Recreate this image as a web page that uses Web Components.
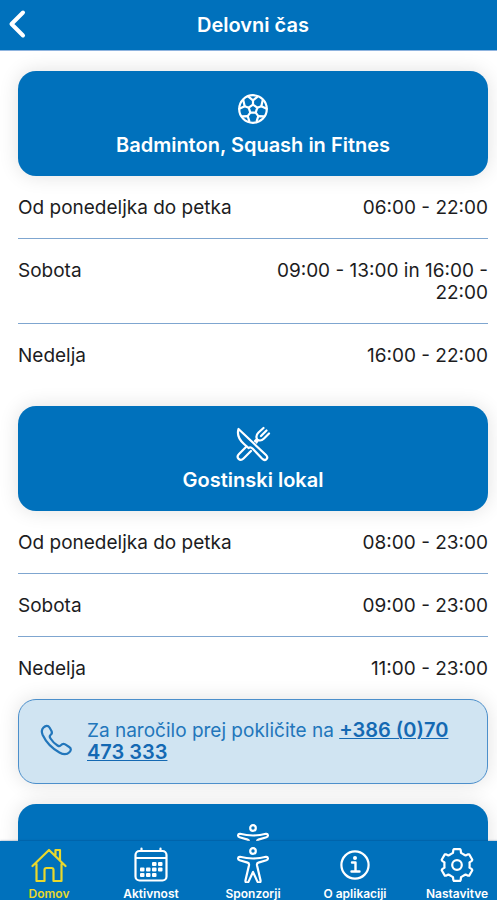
<!DOCTYPE html>
<html lang="sl">
<head>
<meta charset="utf-8">
<meta name="viewport" content="width=device-width, initial-scale=1">
<title>Delovni čas</title>
<style>
  body {
    margin: 0;
    overflow: hidden;
    background: #fff;
    color: #1c1c1e;
    font: 400 19px/22px Inter, "Liberation Sans", sans-serif;
    --brand: #0071bc;
    --active: #e9d82c;
  }
</style>
</head>
<body>
<app-screen>
  <app-header slot="header">Delovni čas</app-header>

  <section-card icon="ball">Badminton, Squash in Fitnes</section-card>
  <hours-table label="Badminton, Squash in Fitnes"
    hours="Od ponedeljka do petka|06:00 - 22:00;Sobota|09:00 - 13:00 in 16:00 - 22:00;Nedelja|16:00 - 22:00"></hours-table>

  <section-card icon="cutlery">Gostinski lokal</section-card>
  <hours-table label="Gostinski lokal" flush
    hours="Od ponedeljka do petka|08:00 - 23:00;Sobota|09:00 - 23:00;Nedelja|11:00 - 23:00"></hours-table>
  <phone-note number="+386 (0)70 473 333">Za naročilo prej pokličite na</phone-note>

  <section-card icon="person"></section-card>

  <tab-bar slot="footer">
    <tab-item icon="home" active>Domov</tab-item>
    <tab-item icon="calendar">Aktivnost</tab-item>
    <tab-item icon="person">Sponzorji</tab-item>
    <tab-item icon="info">O aplikaciji</tab-item>
    <tab-item icon="gear">Nastavitve</tab-item>
  </tab-bar>
</app-screen>

<script>
// cog outline with six teeth around the middle of a 36x36 box
function gearPath() {
  const points = [];
  for (let i = 0; i < 6; i++) {
    const mid = i * 60 - 90;
    [[-25, 12.6], [-18, 12.8], [-14, 15.4], [-11, 16.2], [11, 16.2], [14, 15.4], [18, 12.8], [25, 12.6]].forEach(([off, r]) => {
      const a = (mid + off) * Math.PI / 180;
      points.push((18 + r * Math.cos(a)).toFixed(1) + " " + (18 + r * Math.sin(a)).toFixed(1));
    });
  }
  return "M" + points.join("L") + "Z";
}

const ICONS = {
  back: `<path stroke-width="4" d="M23 5.500 11.500 17 23 28.500"/>`,
  ball: `
    <circle cx="18" cy="18" r="13.800"/>
    <path d="M18 13.6l4.3 3.1-1.6 5h-5.4l-1.6-5z"/>
    <path d="M18 13.6V9.4M22.3 16.7l4-1.5M20.7 21.7l2.6 3.5M15.3 21.7l-2.6 3.5M13.7 16.7l-4-1.5"/>
    <path d="M18 9.4l-4.6-3.8M18 9.4l4.6-3.8M26.3 15.2l1.4-6M26.3 15.2l5.4 2.6M23.3 25.2l5.6.2M23.3 25.2l-1.600 5M12.7 25.2l-5.6.2M12.7 25.2l1.600 5M9.7 15.2l-1.4-6M9.7 15.2l-5.4 2.6"/>`,
  cutlery: `
    <path d="M3.5 3C2 8 4 13.500 9 18l4.500 4q2-1.500 4 .5l9.500 10c3.500 3.500 7-.5 4-3.500z"/>
    <path d="M11.500 20.500 4 28c-3.500 3.500 1 8 4.500 4.500L16 25"/>
    <path d="M20 15l2-2c-1.500-3 0-5 1.500-6.500L28.500 2M34 7.500l-5 5c-2 2-4 2.500-6 1.500l-1.500 2.500M31.500 4.500l-5.500 5.500"/>`,
  person: `
    <circle cx="18" cy="4" r="2.800"/>
    <path d="M5 9.800q13 3.400 26 0c2.200-.2 2.700 2.800.4 3.400l-8 2.400c-1.200.4-1.600 1.400-1.400 2.600l3.500 15c.5 2.700-2.400 3.300-3.300.9L18 25l-4.200 9.100c-.9 2.400-3.800 1.800-3.300-.9l3.500-15c.2-1.200-.2-2.200-1.400-2.600l-8-2.400c-2.300-.6-1.800-3.600.4-3.400z"/>`,
  home: `
    <path d="M1.500 19 18 3l16.500 16M5.500 17v17h8V23q0-2 2-2h5q2 0 2 2v11h8V17M24.500 8V3h4.500v10"/>`,
  calendar: `
    <rect x="2.500" y="4" width="31" height="29.500" rx="4"/>
    <path d="M3 11h30M8.500 4V1.500M27.500 4V1.500"/>
    <g fill="currentColor" stroke="none">
      <rect x="19" y="15" width="4.500" height="4" rx="1"/><rect x="25" y="15" width="4.500" height="4" rx="1"/>
      <rect x="7" y="20.500" width="4.500" height="4" rx="1"/><rect x="13" y="20.500" width="4.500" height="4" rx="1"/>
      <rect x="19" y="20.500" width="4.500" height="4" rx="1"/><rect x="25" y="20.500" width="4.500" height="4" rx="1"/>
      <rect x="7" y="26" width="4.500" height="4" rx="1"/><rect x="13" y="26" width="4.500" height="4" rx="1"/>
      <rect x="19" y="26" width="4.500" height="4" rx="1"/>
    </g>`,
  info: `
    <circle cx="18" cy="18" r="13.600"/>
    <path stroke-width="2.400" d="M15 15.500h3.500V24M14.500 24.500h8"/>
    <circle cx="18" cy="11" r="2" fill="currentColor" stroke="none"/>`,
  gear: `<path d="${gearPath()}"/><circle cx="18" cy="18" r="4.800"/>`,
  phone: `
    <path d="M4.500 3.500c2-2 4.500-2.500 6 0l2 3.500c.8 1.600.3 3-1 4-1.200 1-1 2 0 3.500 1.700 2.700 4 5 7 7 1.500 1 2.500 1 3.500-.3 1.200-1.500 2.700-1.700 4.200-.8l4 2.600c2.300 1.500 2 3.500.2 5.300-2.700 2.700-6 2.400-10 .2C12.500 24 7 18 3.700 11c-1.300-3-1.200-5.500.8-7.500z"/>`
};

class AppIcon extends HTMLElement {
  connectedCallback() {
    this.attachShadow({ mode: "open" }).innerHTML = `
      <style>
        :host { display: block; flex: none; width: 36px; height: 36px; }
        svg { display: block; width: 100%; height: 100%; fill: none; stroke: currentColor;
              stroke-width: 2.2; stroke-linecap: round; stroke-linejoin: round; }
      </style>
      <svg viewBox="0 0 36 36" aria-hidden="true">${ICONS[this.getAttribute("name")]}</svg>
    `;
  }
}

// The screen bleeds a little over the right edge of the window
class AppScreen extends HTMLElement {
  connectedCallback() {
    this.attachShadow({ mode: "open" }).innerHTML = `
      <style>
        :host { display: flex; flex-direction: column; height: 100vh; margin-right: -9px; }
        main { flex: 1; min-height: 0; overflow-y: auto; scrollbar-width: none; padding: 20px 18px; }
      </style>
      <slot name="header"></slot>
      <main><slot></slot></main>
      <slot name="footer"></slot>
    `;
  }
}

class AppHeader extends HTMLElement {
  connectedCallback() {
    this.attachShadow({ mode: "open" }).innerHTML = `
      <style>
        :host { display: block; background: var(--brand); color: #fff; border-bottom: 1px solid #8fb4df; }
        header { display: grid; grid-template-columns: 36px 1fr 36px; align-items: center; height: 50px; }
        button { padding: 0; border: 0; background: none; color: inherit; }
        h1 { margin: 0; font-size: 20px; font-weight: 600; line-height: 22px; text-align: center; }
      </style>
      <header>
        <button type="button" aria-label="Nazaj"><app-icon name="back"></app-icon></button>
        <h1><slot></slot></h1>
      </header>
    `;
  }
}

class SectionCard extends HTMLElement {
  connectedCallback() {
    this.attachShadow({ mode: "open" }).innerHTML = `
      <style>
        :host { display: flex; flex-direction: column; align-items: center; gap: 7px; padding: 20px;
                border-radius: 18px; background: var(--brand); color: #fff;
                box-shadow: 0 0 20px rgba(0, 0, 0, .12); }
        h2 { margin: 0; min-height: 22px; font-size: 20px; font-weight: 600; line-height: 22px; text-align: center; }
      </style>
      <app-icon name="${this.getAttribute("icon")}"></app-icon>
      <h2><slot></slot></h2>
    `;
  }
}

class HoursTable extends HTMLElement {
  connectedCallback() {
    const rows = this.getAttribute("hours").split(";").map(row => {
      const [day, time] = row.split("|");
      return `<tr><th scope="row">${day}</th><td>${time}</td></tr>`;
    });
    this.attachShadow({ mode: "open" }).innerHTML = `
      <style>
        :host { display: block; margin-bottom: 20px; }
        :host([flush]) { margin-bottom: 0; }
        table { width: 100%; table-layout: fixed; border-spacing: 0; }
        th, td { padding: 21px 0 19px; font-weight: 400; vertical-align: top; border-bottom: 1px solid #7fa6d0; }
        th { text-align: left; }
        td { text-align: right; }
        tr:last-child > * { border-bottom: 0; }
      </style>
      <table aria-label="${this.getAttribute("label")}"><tbody>${rows.join("")}</tbody></table>
    `;
  }
}

class PhoneNote extends HTMLElement {
  connectedCallback() {
    const number = this.getAttribute("number");
    this.attachShadow({ mode: "open" }).innerHTML = `
      <style>
        :host { display: flex; align-items: center; gap: 12px; margin-bottom: 20px; padding: 20px 20px 19px;
                border: 1px solid #4c8fcb; border-radius: 18px; background: #d0e4f2; color: #2276bb;
                box-shadow: 0 0 20px rgba(0, 0, 0, .12); }
        p { margin: 0; }
        a { color: #1469b3; font-size: 20px; font-weight: 600; line-height: 20px; text-decoration-thickness: 1px; }
      </style>
      <app-icon name="phone"></app-icon>
      <p><slot></slot> <a href="tel:${number.replace("(0)", "").replace(/ /g, "")}">${number}</a></p>
    `;
  }
}

class TabBar extends HTMLElement {
  connectedCallback() {
    this.attachShadow({ mode: "open" }).innerHTML = `
      <style>
        :host { display: block; background: var(--brand); color: #fff; box-shadow: 0 0 2px rgba(0, 40, 90, .5); z-index: 1; }
        nav { display: flex; height: 59px; margin: 0 -2px; padding-top: 6px; box-sizing: border-box; }
      </style>
      <nav><slot></slot></nav>
    `;
  }
}

class TabItem extends HTMLElement {
  connectedCallback() {
    this.attachShadow({ mode: "open" }).innerHTML = `
      <style>
        :host { flex: 1 1 0; min-width: 0; }
        :host([active]) { color: var(--active); }
        button { display: flex; flex-direction: column; align-items: center; gap: 4px; width: 100%;
                 padding: 0; border: 0; background: none; color: inherit;
                 font: 600 12px/14px Inter, "Liberation Sans", sans-serif; white-space: nowrap; }
      </style>
      <button type="button"><app-icon name="${this.getAttribute("icon")}"></app-icon><span><slot></slot></span></button>
    `;
  }
}

customElements.define("app-icon", AppIcon);
customElements.define("app-screen", AppScreen);
customElements.define("app-header", AppHeader);
customElements.define("section-card", SectionCard);
customElements.define("hours-table", HoursTable);
customElements.define("phone-note", PhoneNote);
customElements.define("tab-bar", TabBar);
customElements.define("tab-item", TabItem);
</script>
</body>
</html>
